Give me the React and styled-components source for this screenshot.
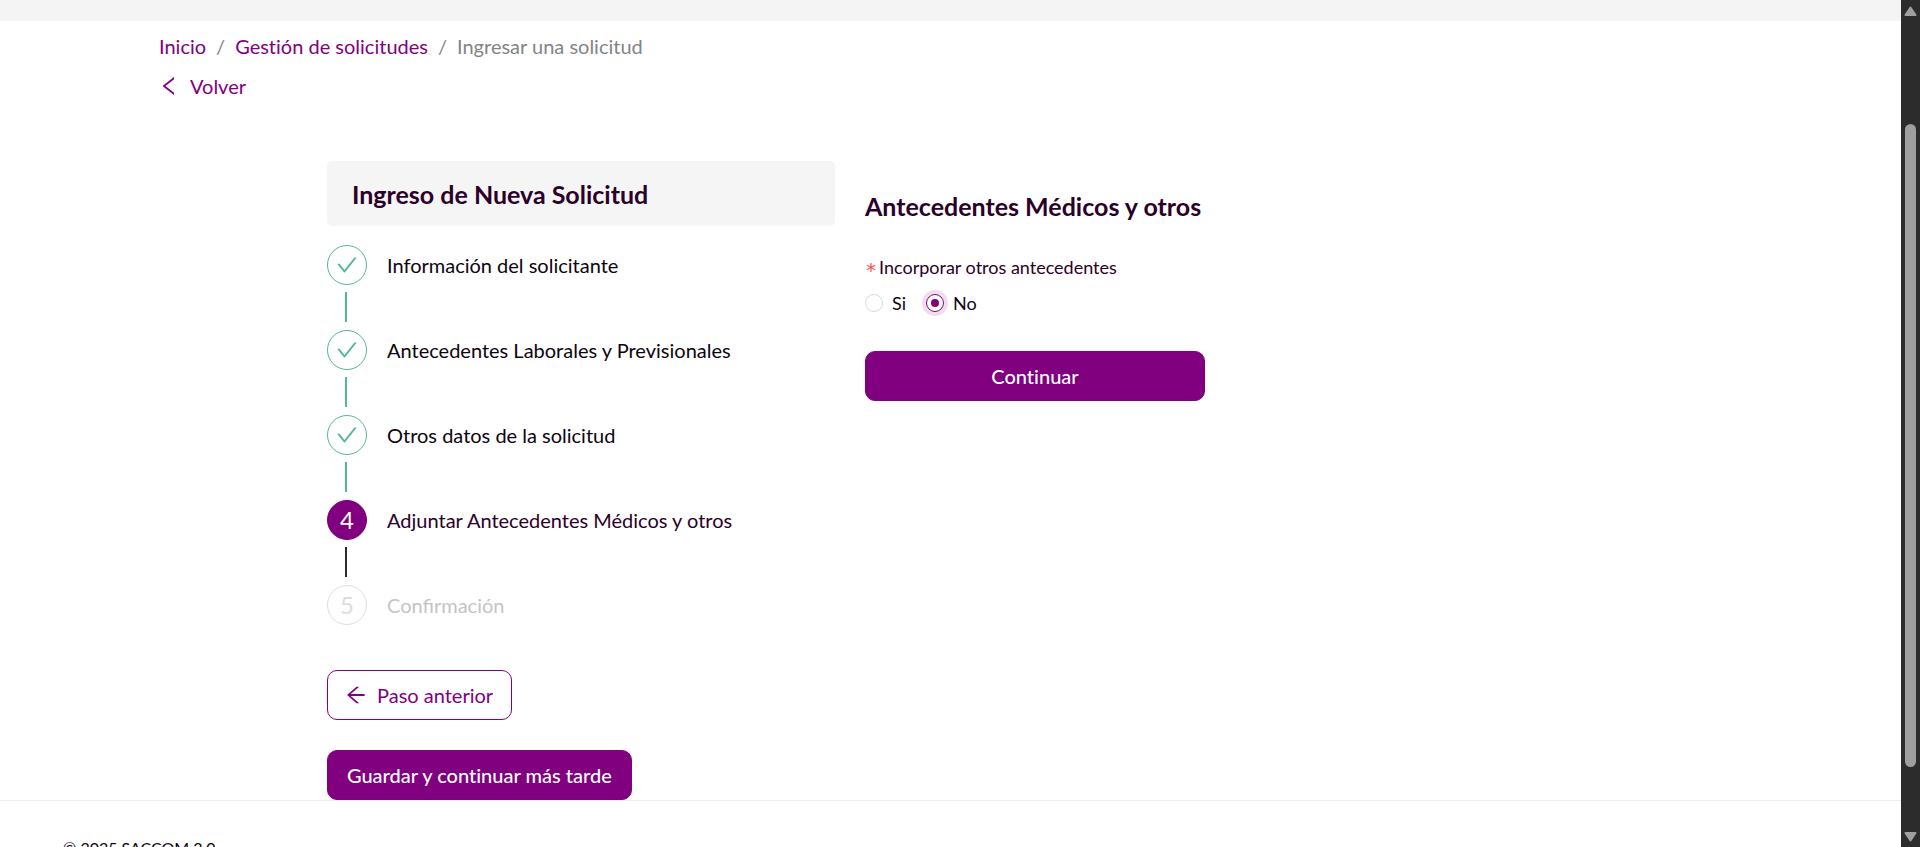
import React, { useState } from 'react';
import styled, { createGlobalStyle } from 'styled-components';
import { AiOutlineCheck, AiOutlineLeft, AiOutlineArrowLeft } from 'react-icons/ai';

const purple = '#800080';
const ink = '#2b0029';
const green = '#52b798';

const GlobalStyle = createGlobalStyle`
  *, *::before, *::after { box-sizing: border-box; }
  body { margin: 0; background: #fff; }
  body, button, input {
    font-family: Lato, "Liberation Sans", sans-serif;
    font-variant-ligatures: none;
  }
`;

const Viewport = styled.div`
  display: flex;
  height: 100vh;
  overflow: hidden;
`;

const Page = styled.div`
  flex: 1;
  min-width: 0;
  overflow: hidden;
  color: #0d0510;
  font-size: 20px;
  line-height: 32px;
`;

const TopBand = styled.div`
  height: 21px;
  background: #f4f4f4;
`;

const TopNav = styled.nav`
  max-width: 1583px;
  margin: 0 auto;
  padding: 9px 0 0;
  display: flex;
  flex-direction: column;
  align-items: flex-start;
  gap: 8px;
`;

const Crumbs = styled.ol`
  display: flex;
  margin: 0;
  padding: 0;
  list-style: none;
  color: #848484;
`;

const Crumb = styled.li`
  & + &::before {
    content: '/';
    margin: 0 10px;
  }
`;

const PurpleLink = styled.a`
  display: inline-flex;
  align-items: center;
  gap: 9px;
  color: ${purple};
  text-decoration: none;
`;

const BackLink = styled(PurpleLink)`
  margin-left: -2px;
`;

const Main = styled.main`
  max-width: 1247px;
  margin: 0 auto;
  padding-top: 59px;
  display: grid;
  grid-template-columns: 508fr 340fr 339fr;
  column-gap: 30px;
  align-items: start;
`;

const PanelTitle = styled.h1`
  margin: 0 0 19px;
  padding: 17px 25px 16px;
  border-radius: 5px;
  background: #f5f5f5;
  color: ${ink};
  font-size: 25px;
  line-height: 32px;
  font-weight: 700;
`;

const Steps = styled.ol`
  margin: 0;
  padding: 0;
  list-style: none;
`;

const Step = styled.li`
  display: grid;
  grid-template-columns: 40px 1fr;
  column-gap: 20px;
  align-items: center;
  font-variant-ligatures: normal;
  color: ${({ $state }) => ({ done: '#0d0510', current: ink, pending: '#c4c4c4' })[$state]};
`;

const StepMark = styled.span`
  display: flex;
  align-items: center;
  justify-content: center;
  height: 40px;
  border: 1px solid ${({ $state }) => ({ done: green, current: purple, pending: '#dedede' })[$state]};
  border-radius: 50%;
  background: ${({ $state }) => ($state === 'current' ? purple : '#fff')};
  color: ${({ $state }) => ({ done: green, current: '#fff', pending: '#dedede' })[$state]};
  font-size: 24px;
`;

const StepTail = styled.span`
  width: 2px;
  height: 30px;
  margin: 7px 0 8px 18px;
  background: ${({ $state }) => ($state === 'done' ? green : '#2b2b2b')};
`;

const Actions = styled.div`
  display: flex;
  flex-direction: column;
  align-items: flex-start;
  gap: 30px;
  margin-top: 45px;
`;

const Button = styled.button`
  display: inline-flex;
  align-items: center;
  justify-content: center;
  gap: 9px;
  width: ${({ $block }) => ($block ? '100%' : 'auto')};
  height: 50px;
  padding: ${({ $outline }) => ($outline ? '0 18px 0 16px' : '0 19px')};
  border: 1px solid ${purple};
  border-radius: 10px;
  background: ${({ $outline }) => ($outline ? '#fff' : purple)};
  color: ${({ $outline }) => ($outline ? purple : '#fff')};
  font-size: 20px;
  font-weight: ${({ $outline }) => ($outline ? 400 : 500)};
  line-height: 32px;
  white-space: nowrap;
  cursor: pointer;
`;

const Form = styled.form`
  padding-top: 29px;
`;

const FormTitle = styled.h2`
  margin: 0 0 29px;
  color: ${ink};
  font-size: 25px;
  line-height: 32px;
  font-weight: 700;
  white-space: nowrap;
`;

const Field = styled.fieldset`
  margin: 0 0 32px;
  padding: 0;
  border: 0;
  font-size: 18px;
  line-height: 32px;
`;

const Legend = styled.legend`
  display: flex;
  gap: 2px;
  padding: 0;
  color: ${ink};
`;

const Required = styled.span`
  height: 32px;
  color: #ff4d4f;
  font-family: "DejaVu Sans Mono", monospace;
  font-size: 20px;
  line-height: 38px;
`;

const Options = styled.div`
  display: flex;
  gap: 20px;
  padding-top: 4px;
`;

const Option = styled.label`
  display: flex;
  align-items: center;
  gap: 9px;
  cursor: pointer;
`;

const Radio = styled.input.attrs({ type: 'radio' })`
  appearance: none;
  display: grid;
  place-items: center;
  width: 18px;
  height: 18px;
  margin: 0;
  border: 1px solid #d9d9d9;
  border-radius: 50%;
  outline: none;

  &:checked {
    border-color: ${purple};
    box-shadow: 0 0 0 4px #f0deef;
  }

  &:checked::before {
    content: '';
    width: 8px;
    height: 8px;
    border-radius: 50%;
    background: ${purple};
  }
`;

const Footer = styled.footer`
  padding: 31px 63px;
  border-top: 1px solid #ececec;
  font-size: 16px;
  line-height: 32px;
`;

const Scrollbar = styled.div`
  display: flex;
  flex-direction: column;
  align-items: center;
  width: 19px;
  background: #2c2c2c;
`;

const ScrollArrow = styled.svg`
  flex: none;
  width: 13px;
  height: 20px;
  fill: #9f9f9f;
  stroke: #9f9f9f;
  stroke-width: 2;
  stroke-linejoin: round;
`;

const ScrollGap = styled.div`
  flex: ${({ $share }) => $share} 0 0;
`;

const ScrollThumb = styled(ScrollGap)`
  width: 11px;
  border-radius: 6px;
  background: #9f9f9f;
`;

const steps = [
  { label: 'Información del solicitante', state: 'done' },
  { label: 'Antecedentes Laborales y Previsionales', state: 'done' },
  { label: 'Otros datos de la solicitud', state: 'done' },
  { label: 'Adjuntar Antecedentes Médicos y otros', state: 'current' },
  { label: 'Confirmación', state: 'pending' },
];

export default function App() {
  const [answer, setAnswer] = useState('No');

  return (
    <Viewport>
      <GlobalStyle />
      <Page>
        <TopBand />
        <TopNav>
          <Crumbs>
            <Crumb><PurpleLink href="#inicio">Inicio</PurpleLink></Crumb>
            <Crumb><PurpleLink href="#solicitudes">Gestión de solicitudes</PurpleLink></Crumb>
            <Crumb>Ingresar una solicitud</Crumb>
          </Crumbs>
          <BackLink href="#volver"><AiOutlineLeft size={24} />Volver</BackLink>
        </TopNav>
        <Main>
          <section>
            <PanelTitle>Ingreso de Nueva Solicitud</PanelTitle>
            <Steps>
              {steps.map(({ label, state }, i) => (
                <Step key={label} $state={state}>
                  <StepMark $state={state}>
                    {state === 'done' ? <AiOutlineCheck size={24} /> : i + 1}
                  </StepMark>
                  <span>{label}</span>
                  {i < steps.length - 1 && <StepTail $state={state} />}
                </Step>
              ))}
            </Steps>
            <Actions>
              <Button type="button" $outline><AiOutlineArrowLeft size={24} />Paso anterior</Button>
              <Button type="button">Guardar y continuar más tarde</Button>
            </Actions>
          </section>
          <Form onSubmit={(e) => e.preventDefault()}>
            <FormTitle>Antecedentes Médicos y otros</FormTitle>
            <Field>
              <Legend><Required>*</Required>Incorporar otros antecedentes</Legend>
              <Options>
                {['Si', 'No'].map((value) => (
                  <Option key={value}>
                    <Radio
                      name="antecedentes"
                      value={value}
                      checked={answer === value}
                      onChange={() => setAnswer(value)}
                    />
                    {value}
                  </Option>
                ))}
              </Options>
            </Field>
            <Button type="submit" $block>Continuar</Button>
          </Form>
        </Main>
        <Footer>© 2025 SACCOM 2.0</Footer>
      </Page>
      <Scrollbar aria-hidden="true">
        <ScrollArrow viewBox="0 0 13 20"><path d="M6.500 7.500L11.500 15H1.500Z" /></ScrollArrow>
        <ScrollGap $share={104} />
        <ScrollThumb $share={643} />
        <ScrollGap $share={60} />
        <ScrollArrow viewBox="0 0 13 20"><path d="M6.500 13.500L11.500 6H1.500Z" /></ScrollArrow>
      </Scrollbar>
    </Viewport>
  );
}
